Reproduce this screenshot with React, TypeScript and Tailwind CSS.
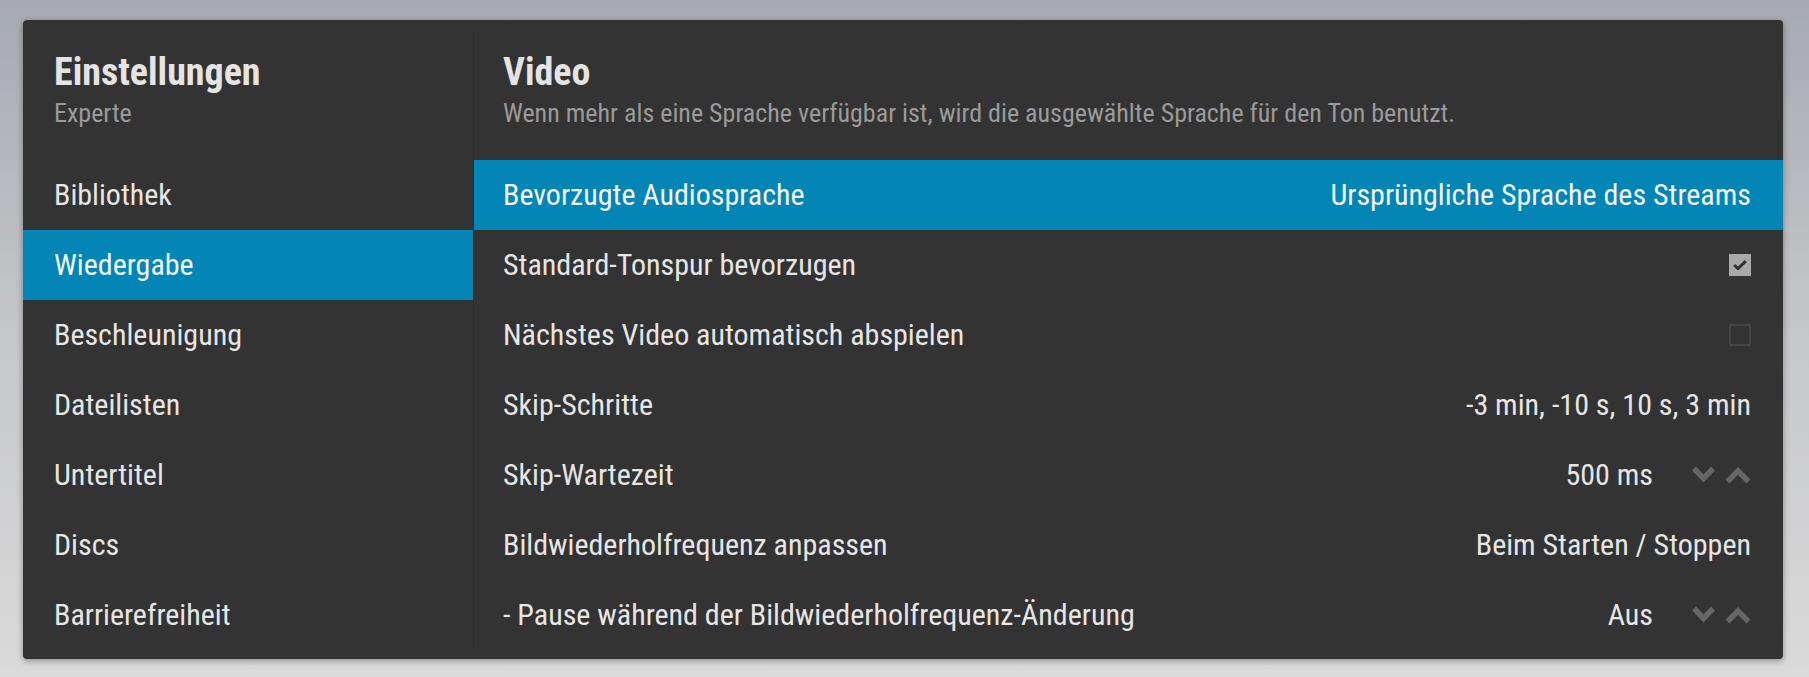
import { ReactNode } from 'react';

type Row = {
  label: string;
  value?: string;
  kind?: 'text' | 'check' | 'spin';
  checked?: boolean;
};

const CATEGORIES = ['Bibliothek', 'Wiedergabe', 'Beschleunigung', 'Dateilisten', 'Untertitel', 'Discs', 'Barrierefreiheit'];

const ROWS: Row[] = [
  { label: 'Bevorzugte Audiosprache', value: 'Ursprüngliche Sprache des Streams' },
  { label: 'Standard-Tonspur bevorzugen', kind: 'check', checked: true },
  { label: 'Nächstes Video automatisch abspielen', kind: 'check', checked: false },
  { label: 'Skip-Schritte', value: '-3 min, -10 s, 10 s, 3 min' },
  { label: 'Skip-Wartezeit', value: '500 ms', kind: 'spin' },
  { label: 'Bildwiederholfrequenz anpassen', value: 'Beim Starten / Stoppen' },
  { label: '- Pause während der Bildwiederholfrequenz-Änderung', value: 'Aus', kind: 'spin' },
];

function Checkbox({ checked }: { checked?: boolean }) {
  if (!checked) {
    return <span className="h-[22px] w-[22px] border-2 border-[#454545]" />;
  }
  return (
    <span className="flex h-[22px] w-[22px] items-center justify-center bg-[#a9a9a9]">
      <svg viewBox="0 0 14 10" className="h-[10px] w-[14px]">
        <path d="M1.2 5 L5 8.6 L12.8 1.2" fill="none" stroke="#333" strokeWidth="3" />
      </svg>
    </span>
  );
}

function Spinner() {
  return (
    <span className="ml-[39px] flex items-center gap-[10px]">
      <svg viewBox="0 0 23 18" className="h-[18px] w-[23px]">
        <polyline points="2,2.5 11.5,12.5 21,2.5" fill="none" stroke="#666" strokeWidth="5.5" />
      </svg>
      <svg viewBox="0 0 26 17" className="h-[17px] w-[26px]">
        <polyline points="2.5,14.5 13,4 23.5,14.5" fill="none" stroke="#666" strokeWidth="5.5" />
      </svg>
    </span>
  );
}

function SettingRow({ row, active }: { row: Row; active: boolean }) {
  let right: ReactNode = null;
  if (row.kind === 'check') right = <Checkbox checked={row.checked} />;
  else if (row.kind === 'spin')
    right = (
      <span className="flex items-center">
        <span>{row.value}</span>
        <Spinner />
      </span>
    );
  else right = <span>{row.value}</span>;

  return (
    <div
      className={
        'flex h-[70px] items-center justify-between pl-[29px] pr-[32px] text-[30px] leading-[70px] ' +
        (active ? 'bg-[#0385b6] text-[#f2f2f2]' : 'text-[#e6e6e6]')
      }
    >
      <span>{row.label}</span>
      {right}
    </div>
  );
}

export default function App() {
  return (
    <div className="h-[677px] w-[1809px] overflow-hidden bg-linear-to-b from-[#a6aab1] via-[#c6c7ca] to-[#dadada] pl-[23px] pt-[20px] font-['Roboto_Condensed',Roboto,sans-serif]">
      <div className="flex h-[639px] w-[1760px] rounded-[4px] bg-[#333333] shadow-[0_2px_6px_rgba(0,0,0,0.35)]">
        {/* Categories */}
        <div className="flex w-[450px] flex-col">
          <div className="h-[140px] pl-[31px] pt-[28px]">
            <div className="text-[38px] font-bold leading-[48px] text-[#e4e4e4]">Einstellungen</div>
            <div className="mt-[2px] text-[26px] leading-[30px] text-[#9a9a9a]">Experte</div>
          </div>
          {CATEGORIES.map((c) => (
            <div
              key={c}
              className={
                'h-[70px] pl-[31px] text-[30px] leading-[70px] ' +
                (c === 'Wiedergabe' ? 'bg-[#0385b6] text-[#f2f2f2]' : 'text-[#e6e6e6]')
              }
            >
              {c}
            </div>
          ))}
        </div>

        <div className="my-[10px] w-px bg-[#2c2c2c]" />

        {/* Settings list */}
        <div className="flex flex-1 flex-col">
          <div className="h-[140px] pl-[29px] pt-[28px]">
            <div className="text-[38px] font-bold leading-[48px] text-[#e4e4e4]">Video</div>
            <div className="mt-[2px] text-[26px] leading-[30px] text-[#9a9a9a]">
              Wenn mehr als eine Sprache verfügbar ist, wird die ausgewählte Sprache für den Ton benutzt.
            </div>
          </div>
          {ROWS.map((r, i) => (
            <SettingRow key={r.label} row={r} active={i === 0} />
          ))}
        </div>
      </div>
    </div>
  );
}
